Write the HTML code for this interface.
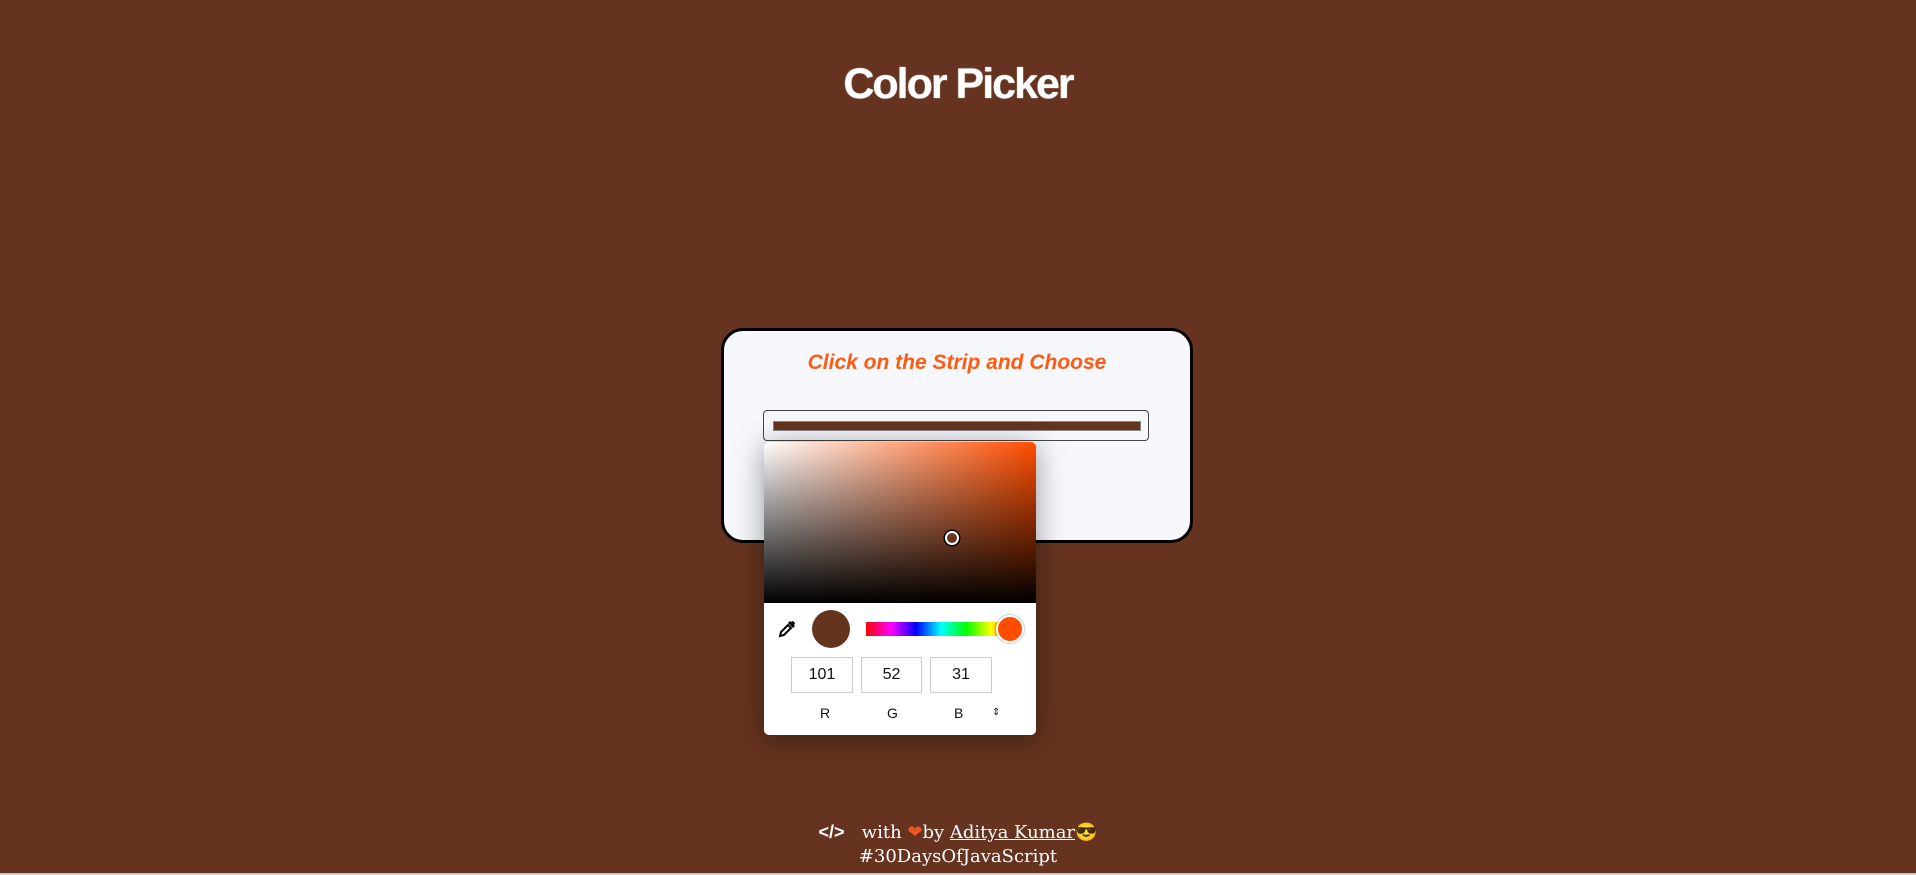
<!DOCTYPE html>
<html><head><meta charset="utf-8"><style>
body{margin:0;width:1916px;height:875px;background:#65331f;position:relative;overflow:hidden;font-family:"Liberation Sans",sans-serif}
.t{position:absolute;left:0;right:0;top:60px;text-align:center;color:#fff;font:bold 43px "Liberation Sans",sans-serif;letter-spacing:-2px;text-shadow:0 0 1px #fff}
.card{position:absolute;left:721px;top:328px;width:466px;height:209px;border:3px solid #000;border-radius:22px;background:#f7f8fd}
.h{position:absolute;left:0;right:0;top:20px;text-align:center;color:#ff5a0f;font:italic bold 21px "Liberation Sans",sans-serif}
.inp{position:absolute;left:763px;top:410px;width:384px;height:29px;border:1px solid #444;border-radius:4px;background:#f7f8fd}
.inp div{position:absolute;left:9px;top:10px;width:366px;height:8px;background:#65341f;border:1px solid #888}
.pk{position:absolute;left:764px;top:442px;width:272px;height:293px;background:#fff;border-radius:5px;box-shadow:0 4px 30px rgba(0,0,0,.4);overflow:hidden}
.grad{position:absolute;left:0;top:0;width:272px;height:161px;background:linear-gradient(to top,#000,rgba(0,0,0,0)),linear-gradient(to right,#fff,#ff4d00)}
.cur{position:absolute;left:181px;top:89px;width:10px;height:10px;border:2px solid #fff;border-radius:50%;box-shadow:0 0 0 1.5px #000}
.sw{position:absolute;left:48px;top:168px;width:38px;height:38px;border-radius:50%;background:#65341f}
.hue{position:absolute;left:102px;top:180px;width:150px;height:14px;background:linear-gradient(to right,#f00,#f0f,#00f,#0ff,#0f0,#ff0,#f00)}
.th{position:absolute;left:232px;top:173px;width:24px;height:24px;border-radius:50%;background:#ff4d00;border:2px solid #fff;box-shadow:0 0 2px rgba(0,0,0,.5)}
.b{position:absolute;top:215px;height:34px;border:1px solid #ccc;text-align:center;line-height:34px;font-size:16px;color:#111}
.l{position:absolute;top:263px;font-size:14px;color:#111}
.f{position:absolute;left:0;right:0;text-align:center;color:#fff;font:18px "DejaVu Serif","Liberation Serif",serif}
</style></head><body>
<div class="t">Color Picker</div>
<div class="card"><div class="h">Click on the Strip and Choose</div></div>
<div class="inp"><div></div></div>
<div class="pk">
<div class="grad"></div><div class="cur"></div>
<svg style="position:absolute;left:14px;top:178px" width="18" height="18" viewBox="0 0 18 18"><path d="M2 16l1-4 7-7 3 3-7 7z" fill="none" stroke="#000" stroke-width="2"/><path d="M10 3l2-2 1 1 2-1 2 2-1 2 1 1-2 2z" fill="#000"/></svg>
<div class="sw"></div><div class="hue"></div><div class="th"></div>
<div class="b" style="left:27px;width:60px">101</div>
<div class="b" style="left:97px;width:59px">52</div>
<div class="b" style="left:166px;width:60px">31</div>
<div class="l" style="left:56px">R</div><div class="l" style="left:123px">G</div><div class="l" style="left:190px">B</div><div class="l" style="left:228px;font-size:10px;top:265px">⇕</div>
</div>
<div class="f" style="top:822px;font-size:18px"><b style="font-family:'Liberation Sans'">&lt;/&gt;</b> &nbsp; with <span style="color:#e52">❤</span>by <u>Aditya Kumar</u>😎</div>
<div class="f" style="top:846px">#30DaysOfJavaScript</div>
<div style="position:absolute;left:0;top:873px;width:1916px;height:2px;background:#ccc"></div>
</body></html>
